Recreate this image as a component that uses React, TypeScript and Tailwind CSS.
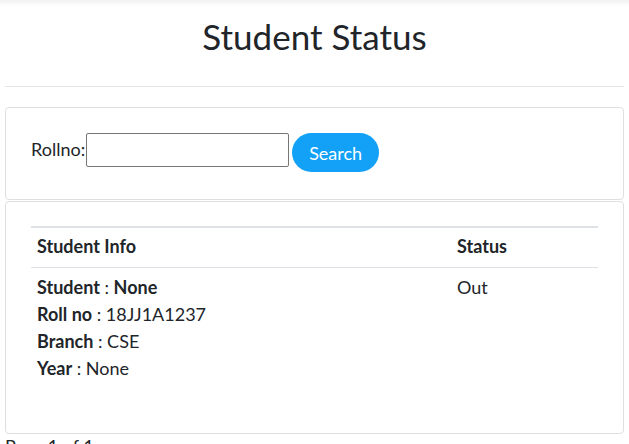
import React from "react";

export default function App() {
  return (
    <div className="min-h-[444px] bg-white text-[#212529]" style={{ fontFamily: "Lato, 'Noto Sans', sans-serif" }}>
      <div className="h-[6px] bg-gradient-to-b from-[#f1f1f1] to-white" />
      <h1 className="mt-[9px] text-center text-[35px] leading-[43px] font-normal text-[#212529]">Student Status</h1>
      <div className="px-[5px]">
        <hr className="mt-[28px] border-t border-[#e5e5e5]" />
        <div className="mt-[20px] rounded-[4px] border border-[#dfdfdf] px-[25px] pt-[25px] pb-[27px]">
          <div className="flex items-start">
            <label className="mt-[4px] text-[18px] leading-[24px]">Rollno:</label>
            <input className="ml-[1px] h-[34px] w-[203px] rounded-[2px] border border-[#767676] bg-white px-1 outline-none" />
            <button className="ml-[3px] h-[39px] w-[87px] rounded-full bg-[#12a1f7] text-[18px] leading-[24px] text-white">Search</button>
          </div>
        </div>
        <div className="mt-px rounded-[4px] border border-[#dfdfdf] px-[25px] pt-[24px] pb-[45px]">
          <table className="w-full border-collapse text-[18px]">
            <thead>
              <tr className="border-t-2 border-b border-[#dee2e6]">
                <th className="w-[420px] px-[6px] pt-[8px] pb-[11px] text-left font-bold leading-[20px]">Student Info</th>
                <th className="px-[6px] pt-[8px] pb-[11px] text-left font-bold leading-[20px]">Status</th>
              </tr>
            </thead>
            <tbody>
              <tr>
                <td className="px-[6px] pt-[6px] pb-[6px] align-top leading-[27px]">
                  <div><b>Student</b> : <b>None</b></div>
                  <div><b>Roll no</b> : 18JJ1A1237</div>
                  <div><b>Branch</b> : CSE</div>
                  <div><b>Year</b> : None</div>
                </td>
                <td className="px-[6px] pt-[6px] pb-[6px] align-top leading-[27px]">Out</td>
              </tr>
            </tbody>
          </table>
        </div>
        <div className="text-[18px] leading-[24px]">Page 1 of 1</div>
      </div>
    </div>
  );
}
